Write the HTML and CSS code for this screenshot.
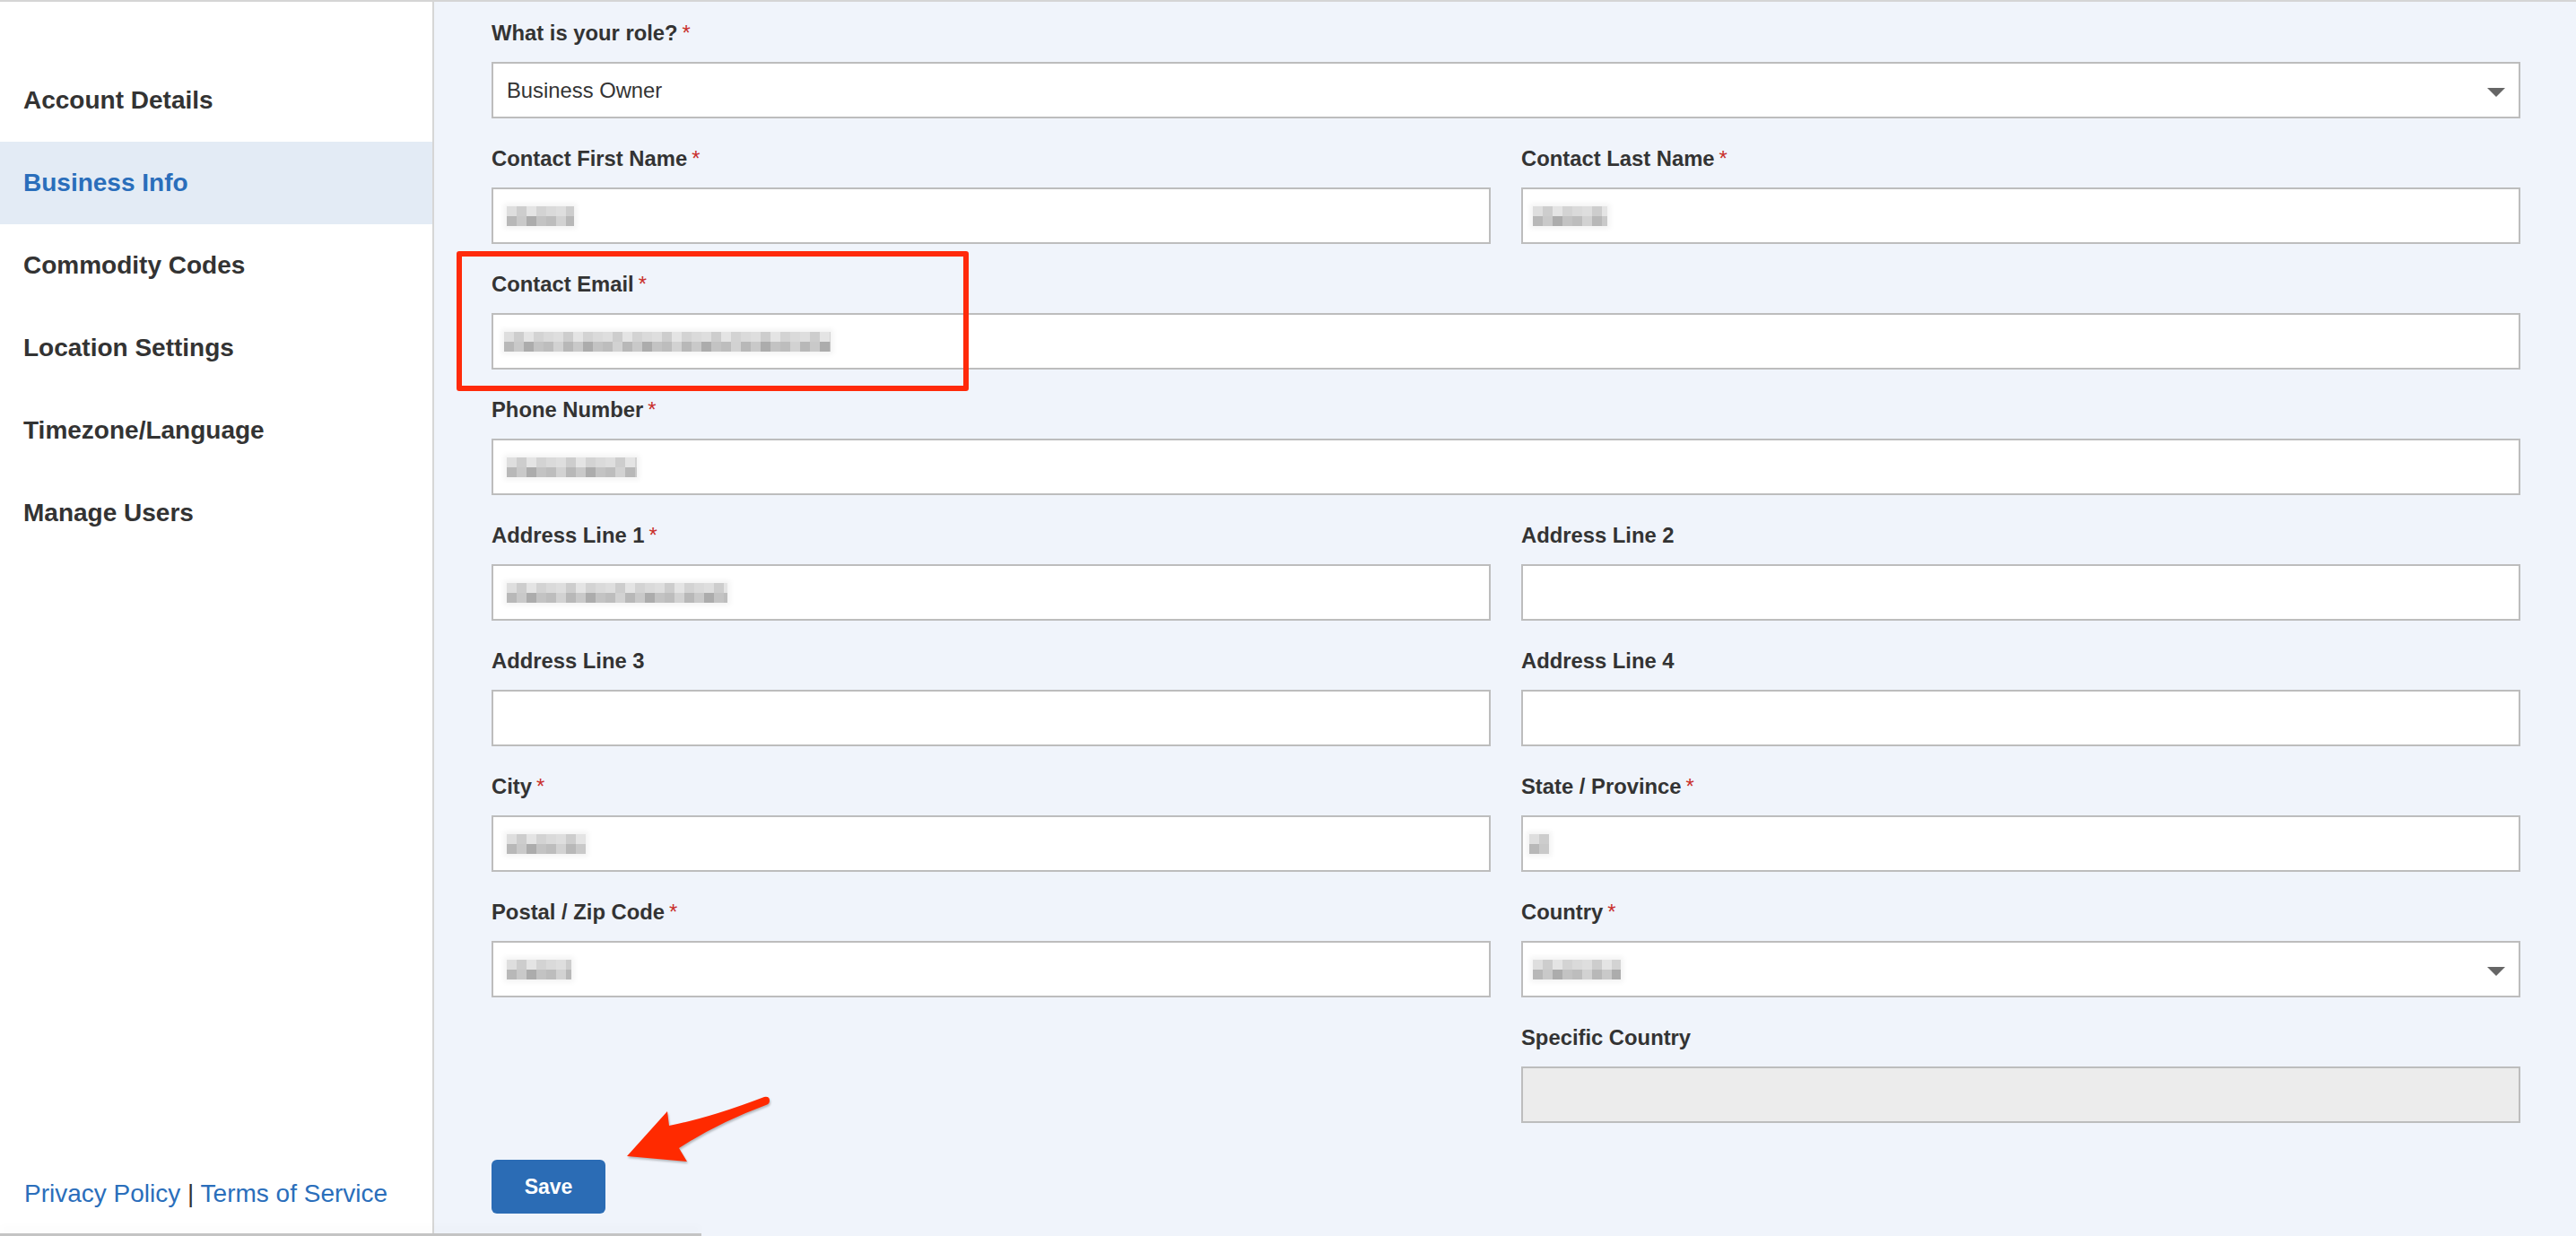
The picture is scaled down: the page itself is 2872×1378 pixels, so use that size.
FILE: index.html
```html
<!DOCTYPE html>
<html>
  <head>
    <title>Business Info</title>
    <link rel="stylesheet" href="styles.css">
  </head>
  <body>
    <div class="page">
      <div class="sidebar">
        <ul class="nav">
          <li>Account Details</li>
          <li class="active">Business Info</li>
          <li>Commodity Codes</li>
          <li>Location Settings</li>
          <li>Timezone/Language</li>
          <li>Manage Users</li>
        </ul>
        <div class="legal"><a href="#">Privacy Policy</a> | <a href="#">Terms of Service</a></div>
      </div>

      <div class="main">
        <div class="form">
          <div class="field wide">
            <label>What is your role?<span class="req">*</span></label>
            <div class="input select">Business Owner</div>
          </div>

          <div class="field">
            <label>Contact First Name<span class="req">*</span></label>
            <div class="input"><span class="mosaic m-first"></span></div>
          </div>
          <div class="field">
            <label>Contact Last Name<span class="req">*</span></label>
            <div class="input"><span class="mosaic m-last"></span></div>
          </div>

          <div class="field wide">
            <label>Contact Email<span class="req">*</span></label>
            <div class="input"><span class="mosaic m-email"></span></div>
          </div>

          <div class="field wide">
            <label>Phone Number<span class="req">*</span></label>
            <div class="input"><span class="mosaic m-phone"></span></div>
          </div>

          <div class="field">
            <label>Address Line 1<span class="req">*</span></label>
            <div class="input"><span class="mosaic m-addr"></span></div>
          </div>
          <div class="field">
            <label>Address Line 2</label>
            <div class="input"></div>
          </div>

          <div class="field">
            <label>Address Line 3</label>
            <div class="input"></div>
          </div>
          <div class="field">
            <label>Address Line 4</label>
            <div class="input"></div>
          </div>

          <div class="field">
            <label>City<span class="req">*</span></label>
            <div class="input"><span class="mosaic m-city"></span></div>
          </div>
          <div class="field">
            <label>State / Province<span class="req">*</span></label>
            <div class="input"><span class="mosaic m-state"></span></div>
          </div>

          <div class="field">
            <label>Postal / Zip Code<span class="req">*</span></label>
            <div class="input"><span class="mosaic m-zip"></span></div>
          </div>
          <div class="field">
            <label>Country<span class="req">*</span></label>
            <div class="input select"><span class="mosaic m-country"></span></div>
          </div>

          <div class="field right">
            <label>Specific Country</label>
            <div class="input disabled"></div>
          </div>
        </div>

        <button class="save">Save</button>
      </div>
    </div>

    <!-- annotations -->
    <div class="callout"></div>
    <svg class="arrow" width="180" height="90" viewBox="690 1215 180 90">
      <path d="M699 1289 L744 1239 L746 1255 Q792 1246 852 1223 Q858 1222 858 1227 Q858 1231 854 1232 Q800 1252 757 1280 L766 1295 Z" fill="#ff2a00"/>
    </svg>
    <div class="hscroll"></div>
  </body>
</html>
```

FILE: styles.css
```css
body {
  margin: 0;
  height: 1378px;
  overflow: hidden;
  position: relative;
  font-family: "Liberation Sans", Arial, Helvetica, sans-serif;
  color: #333;
  background-color: #f0f4fb;
}

.page {
  display: flex;
  height: 1376px;
  border-top: 2px solid #d5d5d5;
}

/* sidebar */

.sidebar {
  width: 482px;
  flex: none;
  background-color: white;
  border-right: 2px solid #d6d6d6;
  display: flex;
  flex-direction: column;
  justify-content: space-between;
}

.nav {
  list-style: none;
  margin: 0;
  padding: 64px 0 0 0;
}

.nav li {
  height: 92px;
  line-height: 92px;
  padding-left: 26px;
  font-size: 28px;
  font-weight: bold;
  color: #333;
}

.nav li.active {
  background-color: #e3ebf5;
  color: #2a6ebb;
}

.legal {
  padding: 0 0 31px 27px;
  font-size: 28px;
  line-height: 32px;
  color: #333;
}

.legal a {
  color: #2a6ebb;
  text-decoration: none;
}

/* form */

.main {
  flex: 1;
  padding: 20px 62px 0 64px;
}

.form {
  display: grid;
  grid-template-columns: 1fr 1fr;
  column-gap: 34px;
  row-gap: 30px;
}

.field.wide {
  grid-column: 1 / 3;
}

.field.right {
  grid-column: 2;
}

.field label {
  display: block;
  font-size: 23.8px;
  line-height: 29px;
  font-weight: bold;
  color: #333;
  margin-bottom: 18px;
}

.req {
  color: #c9302c;
  font-weight: normal;
  margin-left: 5px;
}

.input {
  box-sizing: border-box;
  height: 63px;
  border: 2px solid #bdbdbd;
  background-color: white;
  padding: 0 15px;
  display: flex;
  align-items: center;
  font-size: 23.8px;
  color: #333;
  position: relative;
}

.input.disabled {
  background-color: #ececec;
}

.input.select::after {
  content: "";
  position: absolute;
  right: 15px;
  top: 27px;
  border-left: 10px solid transparent;
  border-right: 10px solid transparent;
  border-top: 10px solid #666;
}

/* pixelated values */

.mosaic {
  display: inline-block;
  height: 22px;
  background:
    repeating-linear-gradient(90deg, #dedede 0 11px, #cdcdcd 11px 22px, #e4e4e4 22px 33px, #d3d3d3 33px 44px, #dadada 44px 55px) 0 0 / 100% 11px no-repeat,
    repeating-linear-gradient(90deg, #b8b8b8 0 11px, #c9c9c9 11px 22px, #acacac 22px 33px, #c3c3c3 33px 44px, #bdbdbd 44px 55px, #d2d2d2 55px 66px) 0 11px / 100% 11px no-repeat;
  box-shadow: 0 0 6px 3px #f3f3f3;
}

.m-first { width: 75px; }
.m-last { width: 83px; margin-left: -4px; }
.m-email { width: 364px; margin-left: -3px; }
.m-phone { width: 145px; }
.m-addr { width: 246px; }
.m-city { width: 88px; }
.m-state { width: 22px; margin-left: -8px; }
.m-zip { width: 72px; }
.m-country { width: 98px; margin-left: -4px; }

.save {
  margin-top: 41px;
  width: 127px;
  height: 60px;
  border: none;
  border-radius: 6px;
  background-color: #2b6cb5;
  color: white;
  font-family: "Liberation Sans", Arial, sans-serif;
  font-size: 23px;
  font-weight: bold;
}

/* annotations */

.callout {
  position: absolute;
  left: 509px;
  top: 280px;
  width: 559px;
  height: 144px;
  border: 6px solid #ff2a0a;
  border-radius: 3px;
}

.arrow {
  position: absolute;
  left: 690px;
  top: 1215px;
  filter: drop-shadow(1px 2px 1px rgba(0, 0, 0, 0.25));
}

.hscroll {
  position: absolute;
  left: 0;
  bottom: 0;
  width: 782px;
  height: 3px;
  background-color: #c4c4c4;
  box-shadow: 0 -6px 10px rgba(0, 0, 0, 0.04);
}
```
